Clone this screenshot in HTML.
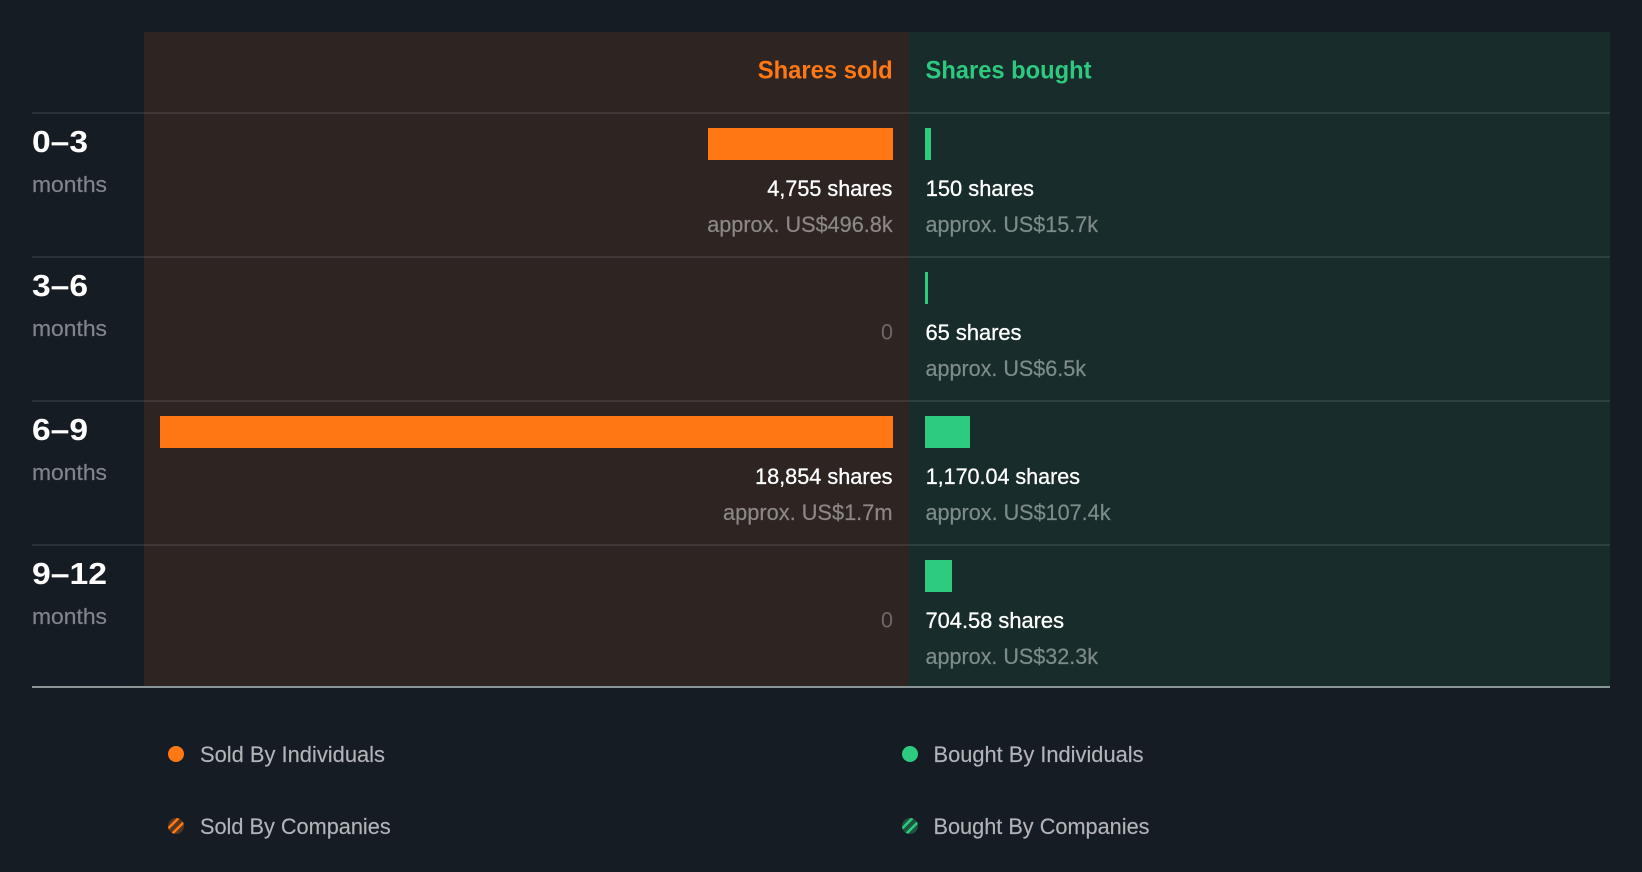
<!DOCTYPE html>
<html lang="en">
<head>
<meta charset="utf-8">
<title>Insider trading volume</title>
<style>
html,body{margin:0;padding:0;background:#151c24;width:1642px;height:872px;overflow:hidden}
svg{display:block;font-family:"Liberation Sans",sans-serif}
.h{font-size:25px;font-weight:700}
.d{font-size:22px;fill:#fff;stroke:#fff;stroke-width:.3px}
.as{font-size:22px;fill:#8c8886;stroke:#8c8886;stroke-width:.2px}
.ab{font-size:22px;fill:#7d8c8a;stroke:#7d8c8a;stroke-width:.2px}
.l{font-size:30.5px;font-weight:700;fill:#fff;text-rendering:geometricPrecision}
.m{font-size:22px;fill:#80858c;stroke:#80858c;stroke-width:.2px}
.z{font-size:22px;fill:#6e6967}
.g{font-size:22px;fill:#b2b4b8;stroke:#b2b4b8;stroke-width:.15px}
</style>
</head>
<body>
<svg width="1642" height="872" viewBox="0 0 1642 872" xmlns="http://www.w3.org/2000/svg">
<rect width="1642" height="872" fill="#151c24"/>
<rect x="144" y="32" width="765" height="655" fill="#2e2523"/>
<rect x="909" y="32" width="701" height="655" fill="#192c2c"/>

<g fill="#fff" fill-opacity=".09">
<rect x="32" y="112" width="1578" height="2"/>
<rect x="32" y="256" width="1578" height="2"/>
<rect x="32" y="400" width="1578" height="2"/>
<rect x="32" y="544" width="1578" height="2"/>
</g>
<rect x="32" y="686" width="1578" height="2" fill="#8b9496"/>

<text class="h" x="757.7" y="78.5" fill="#ff7814" textLength="135" lengthAdjust="spacingAndGlyphs">Shares sold</text>
<text class="h" x="925.5" y="78.5" fill="#2dc97e" textLength="166" lengthAdjust="spacingAndGlyphs">Shares bought</text>

<!-- row 1 -->
<text class="l" x="32" y="152" textLength="56" lengthAdjust="spacingAndGlyphs">0–3</text>
<text class="m" x="32" y="192" textLength="75" lengthAdjust="spacingAndGlyphs">months</text>
<rect x="708" y="128" width="185" height="32" fill="#ff7814"/>
<rect x="925" y="128" width="6" height="32" fill="#2dcb7f"/>
<text class="d" x="767.3" y="196" textLength="125" lengthAdjust="spacingAndGlyphs">4,755 shares</text>
<text class="as" x="707.2" y="232" textLength="185.5" lengthAdjust="spacingAndGlyphs">approx. US$496.8k</text>
<text class="d" x="925.7" y="196" textLength="108.3" lengthAdjust="spacingAndGlyphs">150 shares</text>
<text class="ab" x="925.5" y="232" textLength="172.5" lengthAdjust="spacingAndGlyphs">approx. US$15.7k</text>

<!-- row 2 -->
<text class="l" x="32" y="296" textLength="56" lengthAdjust="spacingAndGlyphs">3–6</text>
<text class="m" x="32" y="336" textLength="75" lengthAdjust="spacingAndGlyphs">months</text>
<rect x="925" y="272" width="3" height="32" fill="#2dcb7f"/>
<text class="z" x="881" y="339.5" textLength="12" lengthAdjust="spacingAndGlyphs">0</text>
<text class="d" x="925.5" y="340" textLength="96" lengthAdjust="spacingAndGlyphs">65 shares</text>
<text class="ab" x="925.5" y="376" textLength="160.5" lengthAdjust="spacingAndGlyphs">approx. US$6.5k</text>

<!-- row 3 -->
<text class="l" x="32" y="440" textLength="56" lengthAdjust="spacingAndGlyphs">6–9</text>
<text class="m" x="32" y="480" textLength="75" lengthAdjust="spacingAndGlyphs">months</text>
<rect x="160" y="416" width="733" height="32" fill="#ff7814"/>
<rect x="925" y="416" width="45" height="32" fill="#2dcb7f"/>
<text class="d" x="755" y="484" textLength="137.5" lengthAdjust="spacingAndGlyphs">18,854 shares</text>
<text class="as" x="723" y="520" textLength="169.5" lengthAdjust="spacingAndGlyphs">approx. US$1.7m</text>
<text class="d" x="925.7" y="484" textLength="154.3" lengthAdjust="spacingAndGlyphs">1,170.04 shares</text>
<text class="ab" x="925.5" y="520" textLength="185" lengthAdjust="spacingAndGlyphs">approx. US$107.4k</text>

<!-- row 4 -->
<text class="l" x="32" y="584" textLength="75" lengthAdjust="spacingAndGlyphs">9–12</text>
<text class="m" x="32" y="624" textLength="75" lengthAdjust="spacingAndGlyphs">months</text>
<rect x="925" y="560" width="27" height="32" fill="#2dcb7f"/>
<text class="z" x="881" y="627.5" textLength="12" lengthAdjust="spacingAndGlyphs">0</text>
<text class="d" x="925.5" y="628" textLength="138.5" lengthAdjust="spacingAndGlyphs">704.58 shares</text>
<text class="ab" x="925.5" y="664" textLength="172.5" lengthAdjust="spacingAndGlyphs">approx. US$32.3k</text>

<!-- legend -->
<circle cx="176" cy="754" r="8" fill="#ff7814"/>
<circle cx="910" cy="754" r="8" fill="#2dcb7f"/>
<clipPath id="c1"><circle cx="176" cy="826" r="8"/></clipPath>
<clipPath id="c2"><circle cx="910" cy="826" r="8"/></clipPath>
<g clip-path="url(#c1)">
<rect x="168" y="818" width="16" height="16" fill="#57371f"/>
<path d="M166 830.6L180 816.6M172 834L186 820" stroke="#ff7814" stroke-width="2.5" fill="none"/>
</g>
<g clip-path="url(#c2)">
<rect x="902" y="818" width="16" height="16" fill="#1e5340"/>
<path d="M900 830.6L914 816.6M906 834L920 820" stroke="#2dcb7f" stroke-width="2.5" fill="none"/>
</g>
<text class="g" x="200" y="762" textLength="185" lengthAdjust="spacingAndGlyphs">Sold By Individuals</text>
<text class="g" x="200" y="834" textLength="190.7" lengthAdjust="spacingAndGlyphs">Sold By Companies</text>
<text class="g" x="933.5" y="762" textLength="210" lengthAdjust="spacingAndGlyphs">Bought By Individuals</text>
<text class="g" x="933.5" y="834" textLength="216" lengthAdjust="spacingAndGlyphs">Bought By Companies</text>
</svg>
</body>
</html>
